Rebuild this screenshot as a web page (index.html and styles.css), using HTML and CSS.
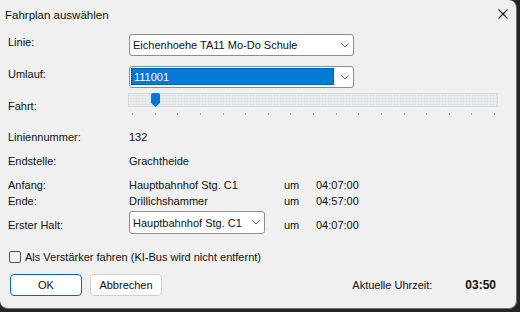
FILE: index.html
```
<!DOCTYPE html>
<html>
<head>
<meta charset="UTF-8">
<title>Fahrplan auswählen</title>
<link rel="stylesheet" href="styles.css">
</head>
<body>
    <div class="window">
        <div class="titlebar">
            <span class="title">Fahrplan auswählen</span>
            <svg class="close" width="10" height="10" viewBox="0 0 10 10">
                <path d="M0.5 0.5 L9.5 9.5 M9.5 0.5 L0.5 9.5" stroke="#1a1a1a" stroke-width="1.1" fill="none"/>
            </svg>
        </div>

        <div class="form">
            <div class="row row-linie">
                <span class="label">Linie:</span>
                <div class="combo combo-wide">
                    <span class="combo-text">Eichenhoehe TA11 Mo-Do Schule</span>
                    <svg class="chevron" width="8" height="5" viewBox="0 0 8 5"><path d="M0.5 0.5 L4 4 L7.5 0.5" stroke="#606060" fill="none"/></svg>
                </div>
            </div>

            <div class="row row-umlauf">
                <span class="label">Umlauf:</span>
                <div class="combo combo-wide">
                    <span class="combo-text selected">111001</span>
                    <svg class="chevron" width="8" height="5" viewBox="0 0 8 5"><path d="M0.5 0.5 L4 4 L7.5 0.5" stroke="#606060" fill="none"/></svg>
                </div>
            </div>

            <div class="row row-fahrt">
                <span class="label label-fahrt">Fahrt:</span>
                <div class="slider">
                    <div class="track"><div class="thumb"></div></div>
                    <div class="ticks">
                        <i></i><i></i><i></i><i></i><i></i><i></i><i></i><i></i><i></i>
                        <i></i><i></i><i></i><i></i><i></i><i></i><i></i><i></i>
                    </div>
                </div>
            </div>

            <div class="info info-first">
                <span class="label">Liniennummer:</span>
                <span class="value">132</span>
            </div>
            <div class="info">
                <span class="label">Endstelle:</span>
                <span class="value">Grachtheide</span>
            </div>
            <div class="info">
                <span class="label">Anfang:</span>
                <span class="value">Hauptbahnhof Stg. C1</span>
                <span class="um">um</span>
                <span class="time">04:07:00</span>
            </div>
            <div class="info info-tight">
                <span class="label">Ende:</span>
                <span class="value">Drillichshammer</span>
                <span class="um">um</span>
                <span class="time">04:57:00</span>
            </div>

            <div class="row row-halt">
                <span class="label">Erster Halt:</span>
                <div class="combo combo-halt">
                    <span class="combo-text">Hauptbahnhof Stg. C1</span>
                    <svg class="chevron" width="8" height="5" viewBox="0 0 8 5"><path d="M0.5 0.5 L4 4 L7.5 0.5" stroke="#606060" fill="none"/></svg>
                </div>
                <span class="um um-halt">um</span>
                <span class="time">04:07:00</span>
            </div>

            <label class="check-row">
                <span class="checkbox"></span>
                <span>Als Verstärker fahren (KI-Bus wird nicht entfernt)</span>
            </label>

            <div class="footer">
                <button class="btn btn-default">OK</button>
                <button class="btn">Abbrechen</button>
                <div class="clock">
                    <span class="clock-label">Aktuelle Uhrzeit:</span>
                    <span class="clock-time">03:50</span>
                </div>
            </div>
        </div>
    </div>
</body>
</html>
```

FILE: styles.css
```
* {
    margin: 0;
    padding: 0;
    box-sizing: border-box;
}

body {
    font-family: "Liberation Sans", Arial, sans-serif;
    font-size: 11px;
    color: #111;
    background: #242424;
    width: 520px;
    height: 312px;
    overflow: hidden;
}

.window {
    width: 517px;
    height: 309px;
    background-color: #f0f0f0;
    border-radius: 0 8px 8px 8px;
    border-right: 1px solid #6e6e6e;
    border-bottom: 1px solid #6e6e6e;
    overflow: hidden;
}

.titlebar {
    height: 30px;
    display: flex;
    justify-content: space-between;
    align-items: flex-start;
}

.title {
    font-size: 11.5px;
    line-height: 16px;
    margin: 7px 0 0 5px;
}

.close {
    margin: 9px 8px 0 0;
}

.form {
    padding-left: 8px;
    display: flex;
    flex-direction: column;
}

.label {
    width: 121px;
    flex-shrink: 0;
    line-height: 16px;
}

.row {
    display: flex;
    align-items: flex-start;
}

.row-linie {
    margin-top: 4px;
}

.row-umlauf {
    margin-top: 10px;
}

.row-fahrt {
    margin-top: 5px;
    height: 24px;
}

.label-fahrt {
    margin-top: 5px;
}

.row-halt {
    margin-top: 2px;
}

.row-halt .label,
.row-halt .time {
    margin-top: 6px;
    line-height: 16px;
}

/* combo boxes */
.combo {
    height: 22px;
    background-color: #fff;
    border: 1px solid #8d8d8d;
    border-radius: 3px;
    display: flex;
    align-items: center;
    justify-content: space-between;
}

.combo-wide {
    width: 225px;
}

.combo-halt {
    width: 136px;
    height: 23px;
}

.combo-text {
    line-height: 16px;
    padding-left: 3px;
    white-space: nowrap;
}

.combo-text.selected {
    align-self: flex-start;
    margin: 1px 0 0 1px;
    width: 203px;
    height: 17px;
    padding-left: 2px;
    background-color: #0078d7;
    color: #fff;
    border: 1px dotted #2b1d05;
}

.chevron {
    margin-right: 4px;
    flex-shrink: 0;
}

/* slider */
.slider {
    margin-left: -1px;
    width: 370px;
}

.track {
    position: relative;
    height: 14px;
    border: 1px solid #d6d9db;
    background-color: #e8eaeb;
    background-image: radial-gradient(#d7dadc 0.6px, transparent 0.8px);
    background-size: 3px 3px;
}

.thumb {
    position: absolute;
    left: 22px;
    top: -1px;
    width: 9px;
    height: 14px;
    background-color: #0078d4;
    border-radius: 2px 2px 0 0;
    clip-path: polygon(0 0, 100% 0, 100% 72%, 50% 100%, 0 72%);
}

.ticks {
    display: flex;
    justify-content: space-between;
    padding: 0 3px 0 4px;
    margin-top: 6px;
}

.ticks i {
    width: 1px;
    height: 2px;
    background-color: #a9a9a9;
}

/* info rows */
.info {
    display: flex;
    line-height: 16px;
}

.info-first {
    margin-top: 12px;
}

.info + .info {
    margin-top: 8px;
}

.info + .info-tight {
    margin-top: 0;
}

.value {
    width: 155px;
}

.um {
    width: 32px;
}

.um-halt {
    margin: 6px 0 0 19px;
    line-height: 16px;
}

/* checkbox */
.check-row {
    margin-top: 15px;
    display: flex;
    align-items: center;
    line-height: 16px;
}

.checkbox {
    width: 12px;
    height: 12px;
    margin: 0 4px 0 1px;
    border: 1px solid #505050;
    border-radius: 2px;
    background-color: #f6f6f6;
}

/* footer */
.footer {
    margin-top: 9px;
    display: flex;
    align-items: center;
    padding-left: 2px;
}

.btn {
    width: 72px;
    height: 22px;
    margin-right: 8px;
    font-family: "Liberation Sans", Arial, sans-serif;
    font-size: 11px;
    color: #111;
    background-color: #fdfdfd;
    border: 1px solid #d0d0d0;
    border-radius: 4px;
}

.btn-default {
    border-color: #0067c0;
}

.clock {
    margin-left: auto;
    margin-right: 20px;
    display: flex;
    line-height: 16px;
}

.clock-label {
    width: 113px;
}

.clock-time {
    font-weight: bold;
    font-size: 12px;
}
```
